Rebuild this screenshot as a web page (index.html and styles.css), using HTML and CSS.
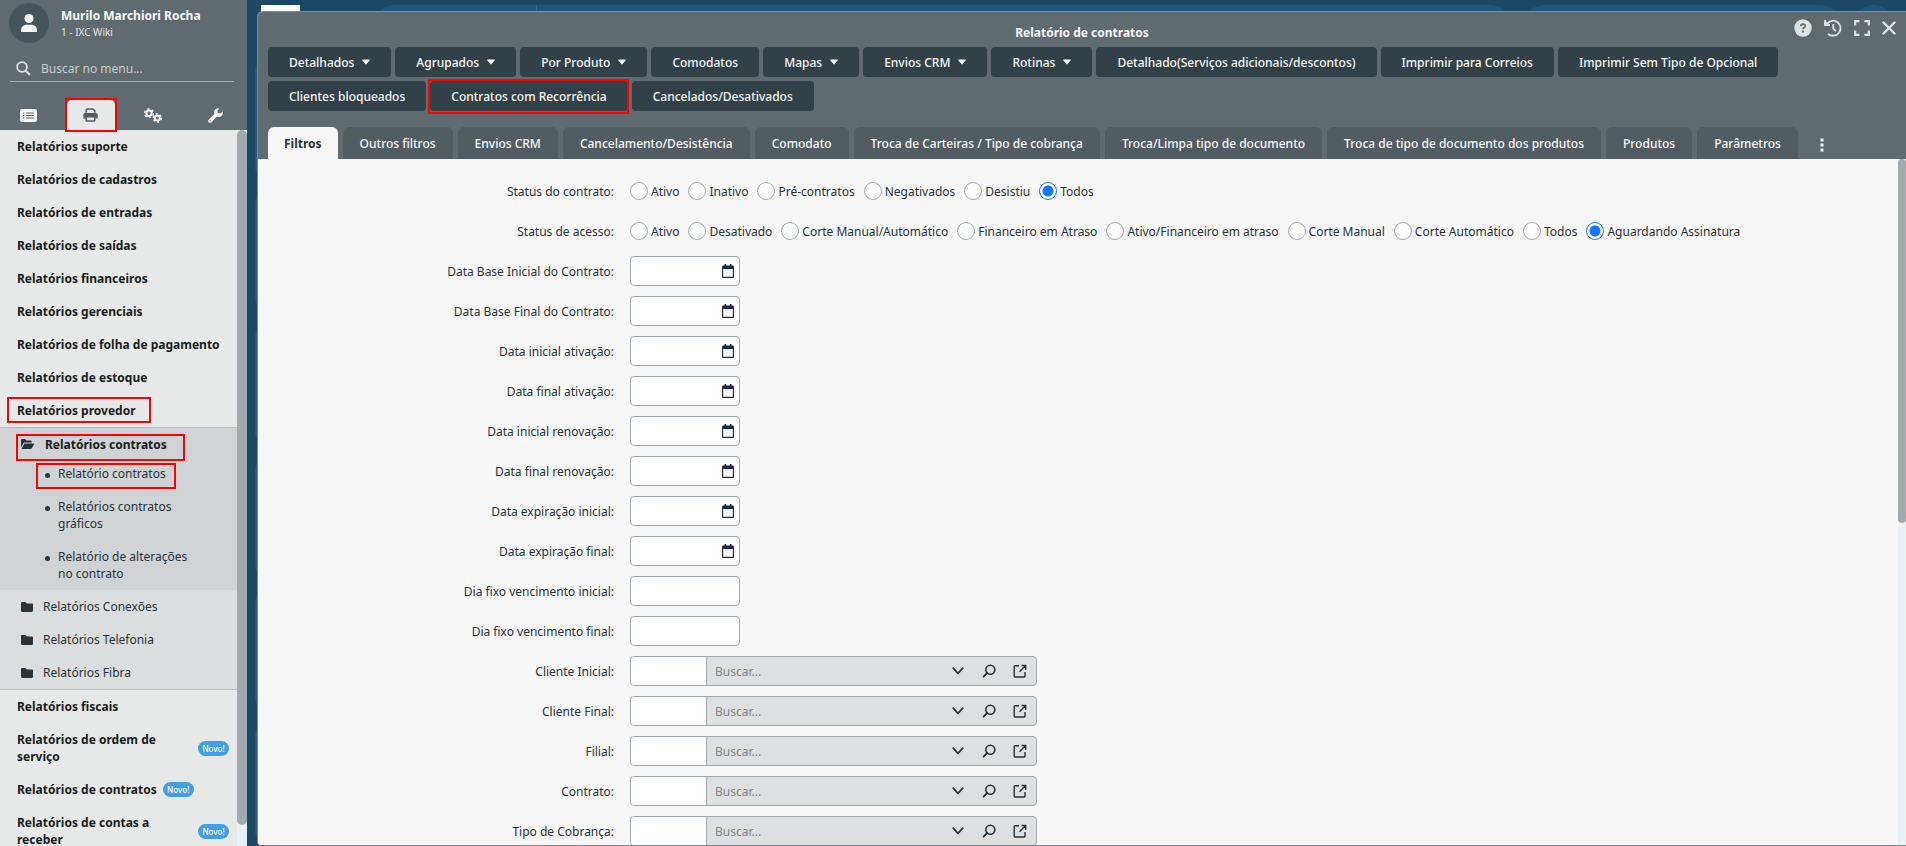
FILE: index.html
```html
<!DOCTYPE html>
<html lang="pt-BR">
<head>
<meta charset="utf-8">
<title>Relatório de contratos</title>
<link rel="stylesheet" href="styles.css">
</head>
<body>
<svg class="defs" aria-hidden="true">
  <symbol id="i-caret" viewBox="0 0 8 6"><path d="M0.6 0.5h6.8c.5 0 .7.5.4.8L4.4 5.2c-.2.3-.6.3-.8 0L.2 1.3C-.1 1 .1.500.6.5z" fill="currentColor"/></symbol>
  <symbol id="i-calendar" viewBox="0 0 12 14"><path fill="currentColor" fill-rule="evenodd" d="M2.500 0h1.500v1.600h4V0h1.500v1.600h1.200c.7 0 1.300.6 1.300 1.300v9.800c0 .7-.6 1.300-1.300 1.300H1.300C.6 14 0 13.400 0 12.700V2.900c0-.7.6-1.300 1.300-1.300h1.200zM1.200 5v7.800h9.600V5z"/></symbol>
  <symbol id="i-chevron" viewBox="0 0 12 8"><path d="M1.200 1.200 6 6.300l4.800-5.100" fill="none" stroke="currentColor" stroke-width="1.700" stroke-linecap="round" stroke-linejoin="round"/></symbol>
  <symbol id="i-lens" viewBox="0 0 14 14"><circle cx="8.300" cy="5.700" r="4.500" fill="none" stroke="currentColor" stroke-width="1.600"/><path d="M5.200 8.800 1.600 12.600" stroke="currentColor" stroke-width="1.900" stroke-linecap="round"/></symbol>
  <symbol id="i-open" viewBox="0 0 14 14"><path d="M6 1.700H2.200c-.6 0-1 .4-1 1v9.300c0 .6.4 1 1 1h8.800c.6 0 1-.4 1-1V8M8.500 1.500h4.200v4.200M12.700 1.500 6.500 7.800" fill="none" stroke="currentColor" stroke-width="1.400"/></symbol>
  <symbol id="i-folder" viewBox="0 0 12 10"><path d="M1.200 0h3.300l1.300 1.400h5c.7 0 1.200.5 1.200 1.200v6.200c0 .7-.5 1.200-1.200 1.200H1.200C.5 10 0 9.500 0 8.800V1.200C0 .5.5 0 1.200 0z" fill="currentColor"/></symbol>
</svg>

<div class="app">
  <aside class="sidebar">
    <header class="side-head">
      <div class="user">
        <span class="avatar"><svg width="16" height="18" viewBox="0 0 16 18"><circle cx="8" cy="4.500" r="4.500" fill="#f4f5f5"/><path d="M0 18v-1.500C0 13 2.500 10.800 5.500 10.800h5c3 0 5.500 2.200 5.500 5.700V18z" fill="#f4f5f5"/></svg></span>
        <div class="who"><strong>Murilo Marchiori Rocha</strong><span>1 - IXC Wiki</span></div>
      </div>
      <label class="menu-search">
        <svg width="15" height="15" viewBox="0 0 15 15"><circle cx="6" cy="6" r="4.900" fill="none" stroke="#dfe3e4" stroke-width="1.800"/><path d="M9.700 9.700 14 14" stroke="#dfe3e4" stroke-width="2"/></svg>
        <input type="text" placeholder="Buscar no menu..." aria-label="Buscar no menu">
      </label>
      <nav class="side-tabs" aria-label="Seções">
        <button type="button" aria-label="Cadastros"><svg width="17" height="13" viewBox="0 0 17 13"><rect width="17" height="13" rx="2" fill="#f7f7f7"/><path d="M3 4h1.500M3 6.500h1.500M3 9h1.500M6 4h8M6 6.500h8M6 9h8" stroke="#5f6b71" stroke-width="1.200"/></svg></button>
        <button type="button" class="active mark mark-tab" aria-label="Relatórios"><svg width="15" height="14" viewBox="0 0 15 14"><path d="M3.300 4.800V2c0-.6.4-1 1-1h5.500L11.700 2.700v2.100" fill="none" stroke="#4f5b61" stroke-width="1.600"/><path d="M2 5h11a1.700 1.700 0 0 1 1.700 1.700v3.800h-2.200V9h-10v1.500H.3V6.700A1.700 1.700 0 0 1 2 5z" fill="#4f5b61"/><rect x="3.300" y="8.800" width="8.400" height="4.200" rx=".6" fill="none" stroke="#4f5b61" stroke-width="1.600"/></svg></button>
        <button type="button" aria-label="Configurações"><svg width="18" height="15" viewBox="0 0 18 15"><g fill="none" stroke="#f7f7f7"><circle cx="5" cy="5.200" r="2.700" stroke-width="2"/><circle cx="5" cy="5.200" r="4.300" stroke-width="1.500" stroke-dasharray="2.200 2.300"/><circle cx="13.300" cy="10" r="2.500" stroke-width="1.900"/><circle cx="13.300" cy="10" r="4" stroke-width="1.500" stroke-dasharray="2.100 2.100"/></g></svg></button>
        <button type="button" aria-label="Ferramentas"><svg width="15" height="15" viewBox="0 0 15 15"><path fill="#f7f7f7" fill-rule="evenodd" d="M14.700 3.200a4.300 4.300 0 0 1-5.800 5.300l-5.500 5.700a1.900 1.900 0 0 1-2.700-2.700l5.700-5.400A4.300 4.300 0 0 1 11.700.4L9.400 2.800l.5 2.300 2.300.5zM2.100 12a.7.7 0 1 0 0 1.400.7.7 0 0 0 0-1.400z"/></svg></button>
      </nav>
    </header>
    <div class="side-body">
      <nav class="menu" aria-label="Relatórios">
        <a href="#" class="item">Relatórios suporte</a>
        <a href="#" class="item">Relatórios de cadastros</a>
        <a href="#" class="item">Relatórios de entradas</a>
        <a href="#" class="item">Relatórios de saídas</a>
        <a href="#" class="item">Relatórios financeiros</a>
        <a href="#" class="item">Relatórios gerenciais</a>
        <a href="#" class="item">Relatórios de folha de pagamento</a>
        <a href="#" class="item">Relatórios de estoque</a>
        <a href="#" class="item"><span class="mark mark-provider">Relatórios provedor</span></a>
        <div class="group">
          <div class="open-folder">
            <a href="#" class="folder-title"><span class="mark mark-folder"><svg width="13" height="11" viewBox="0 0 13 11"><path d="M0 8.500V1.200C0 .5.500 0 1.200 0h2.900l1.300 1.400h4c.7 0 1.200.5 1.200 1.200v1H3.600c-.6 0-1 .3-1.300.8zM.5 10 3 5.200c.2-.4.5-.6.9-.6h8.400c.5 0 .8.5.6.9l-2.200 4c-.2.300-.5.500-.9.500z" fill="#27343a"/></svg>Relatórios contratos</span></a>
            <ul class="leafs">
              <li><a href="#"><span class="mark mark-leaf">Relatório contratos</span></a></li>
              <li><a href="#">Relatórios contratos gráficos</a></li>
              <li><a href="#">Relatório de alterações no contrato</a></li>
            </ul>
          </div>
          <a href="#" class="folder"><svg width="12" height="10"><use href="#i-folder"/></svg>Relatórios Conexões</a>
          <a href="#" class="folder"><svg width="12" height="10"><use href="#i-folder"/></svg>Relatórios Telefonia</a>
          <a href="#" class="folder"><svg width="12" height="10"><use href="#i-folder"/></svg>Relatórios Fibra</a>
        </div>
        <a href="#" class="item">Relatórios fiscais</a>
        <a href="#" class="item"><span>Relatórios de ordem de serviço</span><span class="badge">Novo!</span></a>
        <a href="#" class="item"><span>Relatórios de contratos</span><span class="badge">Novo!</span></a>
        <a href="#" class="item"><span>Relatórios de contas a receber</span><span class="badge">Novo!</span></a>
      </nav>
      <div class="side-track"><div class="side-thumb"></div></div>
    </div>
  </aside>

  <main class="desktop">
    <div class="topbar"><span class="logo"></span><span class="pill pill-wide"><i></i></span><span class="pill"></span><span class="dot"></span></div>
    <div class="cards"><i></i><i></i><i></i><i></i><i></i><i></i></div>

    <section class="window">
      <header class="win-head">
        <h1>Relatório de contratos</h1>
        <div class="win-tools">
          <button type="button" aria-label="Ajuda"><svg width="18" height="18" viewBox="0 0 18 18"><circle cx="9" cy="9" r="8.700" fill="#dee2e3"/><path d="M6.700 7.200c.2-2.900 4.800-2.700 4.600-.2-.1 1.500-2.200 1.500-2.300 3.200" fill="none" stroke="#5f6b71" stroke-width="1.700"/><circle cx="9" cy="12.600" r="1.100" fill="#5f6b71"/></svg></button>
          <button type="button" aria-label="Histórico"><svg width="18" height="18" viewBox="0 0 18 18"><g fill="none" stroke="#dee2e3" stroke-width="1.800"><path d="M2.900 4.900A7.500 7.500 0 1 1 4 14.800"/><path d="M1 1v5h5"/><path d="M9.300 5v4.600l2.600 2.600"/></g><path d="M.5.800V6.500h5.700z" fill="#dee2e3"/></svg></button>
          <button type="button" aria-label="Maximizar"><svg width="16" height="16" viewBox="0 0 16 16"><path d="M1.200 5.500V1.200h4.300M10.500 1.200h4.300v4.300M14.800 10.500v4.300h-4.300M5.500 14.800H1.200v-4.300" fill="none" stroke="#dee2e3" stroke-width="2.200"/></svg></button>
          <button type="button" aria-label="Fechar"><svg width="14" height="14" viewBox="0 0 14 14"><path d="M1.500 1.500l11 11M12.500 1.500l-11 11" stroke="#dee2e3" stroke-width="2.400" stroke-linecap="round"/></svg></button>
        </div>
        <div class="actions">
          <button type="button">Detalhados<svg width="8" height="6"><use href="#i-caret"/></svg></button>
          <button type="button">Agrupados<svg width="8" height="6"><use href="#i-caret"/></svg></button>
          <button type="button">Por Produto<svg width="8" height="6"><use href="#i-caret"/></svg></button>
          <button type="button">Comodatos</button>
          <button type="button">Mapas<svg width="8" height="6"><use href="#i-caret"/></svg></button>
          <button type="button">Envios CRM<svg width="8" height="6"><use href="#i-caret"/></svg></button>
          <button type="button">Rotinas<svg width="8" height="6"><use href="#i-caret"/></svg></button>
          <button type="button">Detalhado(Serviços adicionais/descontos)</button>
          <button type="button">Imprimir para Correios</button>
          <button type="button">Imprimir Sem Tipo de Opcional</button>
          <button type="button">Clientes bloqueados</button>
          <button type="button" class="mark mark-action">Contratos com Recorrência</button>
          <button type="button">Cancelados/Desativados</button>
        </div>
        <div class="tabs" role="tablist">
          <button type="button" role="tab" aria-selected="true">Filtros</button>
          <button type="button" role="tab">Outros filtros</button>
          <button type="button" role="tab">Envios CRM</button>
          <button type="button" role="tab">Cancelamento/Desistência</button>
          <button type="button" role="tab">Comodato</button>
          <button type="button" role="tab">Troca de Carteiras / Tipo de cobrança</button>
          <button type="button" role="tab">Troca/Limpa tipo de documento</button>
          <button type="button" role="tab">Troca de tipo de documento dos produtos</button>
          <button type="button" role="tab">Produtos</button>
          <button type="button" role="tab">Parâmetros</button>
          <button type="button" class="more" aria-label="Mais abas"><svg width="4" height="14" viewBox="0 0 4 14"><path d="M.5.500h3v3h-3zM.5 5.500h3v3h-3zM.5 10.500h3v3h-3z" fill="#f7f7f7"/></svg></button>
        </div>
      </header>

      <div class="win-body">
        <form class="form">
          <div class="row" role="radiogroup" aria-labelledby="l-sc">
            <span class="label" id="l-sc">Status do contrato:</span>
            <div class="radios">
              <label><input type="radio" name="sc">Ativo</label>
              <label><input type="radio" name="sc">Inativo</label>
              <label><input type="radio" name="sc">Pré-contratos</label>
              <label><input type="radio" name="sc">Negativados</label>
              <label><input type="radio" name="sc">Desistiu</label>
              <label><input type="radio" name="sc" checked>Todos</label>
            </div>
          </div>
          <div class="row" role="radiogroup" aria-labelledby="l-sa">
            <span class="label" id="l-sa">Status de acesso:</span>
            <div class="radios">
              <label><input type="radio" name="sa">Ativo</label>
              <label><input type="radio" name="sa">Desativado</label>
              <label><input type="radio" name="sa">Corte Manual/Automático</label>
              <label><input type="radio" name="sa">Financeiro em Atraso</label>
              <label><input type="radio" name="sa">Ativo/Financeiro em atraso</label>
              <label><input type="radio" name="sa">Corte Manual</label>
              <label><input type="radio" name="sa">Corte Automático</label>
              <label><input type="radio" name="sa">Todos</label>
              <label><input type="radio" name="sa" checked>Aguardando Assinatura</label>
            </div>
          </div>
          <div class="row"><label class="label" for="d1">Data Base Inicial do Contrato:</label><div class="date"><input type="text" id="d1"><svg width="12" height="14"><use href="#i-calendar"/></svg></div></div>
          <div class="row"><label class="label" for="d2">Data Base Final do Contrato:</label><div class="date"><input type="text" id="d2"><svg width="12" height="14"><use href="#i-calendar"/></svg></div></div>
          <div class="row"><label class="label" for="d3">Data inicial ativação:</label><div class="date"><input type="text" id="d3"><svg width="12" height="14"><use href="#i-calendar"/></svg></div></div>
          <div class="row"><label class="label" for="d4">Data final ativação:</label><div class="date"><input type="text" id="d4"><svg width="12" height="14"><use href="#i-calendar"/></svg></div></div>
          <div class="row"><label class="label" for="d5">Data inicial renovação:</label><div class="date"><input type="text" id="d5"><svg width="12" height="14"><use href="#i-calendar"/></svg></div></div>
          <div class="row"><label class="label" for="d6">Data final renovação:</label><div class="date"><input type="text" id="d6"><svg width="12" height="14"><use href="#i-calendar"/></svg></div></div>
          <div class="row"><label class="label" for="d7">Data expiração inicial:</label><div class="date"><input type="text" id="d7"><svg width="12" height="14"><use href="#i-calendar"/></svg></div></div>
          <div class="row"><label class="label" for="d8">Data expiração final:</label><div class="date"><input type="text" id="d8"><svg width="12" height="14"><use href="#i-calendar"/></svg></div></div>
          <div class="row"><label class="label" for="v1">Dia fixo vencimento inicial:</label><div class="date"><input type="text" id="v1"></div></div>
          <div class="row"><label class="label" for="v2">Dia fixo vencimento final:</label><div class="date"><input type="text" id="v2"></div></div>
          <div class="row"><label class="label" for="c1">Cliente Inicial:</label><div class="lookup"><input type="text" class="code" id="c1"><input type="text" class="find" placeholder="Buscar..." aria-label="Buscar cliente inicial"><button type="button" aria-label="Abrir lista"><svg width="12" height="8"><use href="#i-chevron"/></svg></button><button type="button" aria-label="Pesquisar"><svg width="14" height="14"><use href="#i-lens"/></svg></button><button type="button" aria-label="Abrir cadastro"><svg width="14" height="14"><use href="#i-open"/></svg></button></div></div>
          <div class="row"><label class="label" for="c2">Cliente Final:</label><div class="lookup"><input type="text" class="code" id="c2"><input type="text" class="find" placeholder="Buscar..." aria-label="Buscar cliente final"><button type="button" aria-label="Abrir lista"><svg width="12" height="8"><use href="#i-chevron"/></svg></button><button type="button" aria-label="Pesquisar"><svg width="14" height="14"><use href="#i-lens"/></svg></button><button type="button" aria-label="Abrir cadastro"><svg width="14" height="14"><use href="#i-open"/></svg></button></div></div>
          <div class="row"><label class="label" for="c3">Filial:</label><div class="lookup"><input type="text" class="code" id="c3"><input type="text" class="find" placeholder="Buscar..." aria-label="Buscar filial"><button type="button" aria-label="Abrir lista"><svg width="12" height="8"><use href="#i-chevron"/></svg></button><button type="button" aria-label="Pesquisar"><svg width="14" height="14"><use href="#i-lens"/></svg></button><button type="button" aria-label="Abrir cadastro"><svg width="14" height="14"><use href="#i-open"/></svg></button></div></div>
          <div class="row"><label class="label" for="c4">Contrato:</label><div class="lookup"><input type="text" class="code" id="c4"><input type="text" class="find" placeholder="Buscar..." aria-label="Buscar contrato"><button type="button" aria-label="Abrir lista"><svg width="12" height="8"><use href="#i-chevron"/></svg></button><button type="button" aria-label="Pesquisar"><svg width="14" height="14"><use href="#i-lens"/></svg></button><button type="button" aria-label="Abrir cadastro"><svg width="14" height="14"><use href="#i-open"/></svg></button></div></div>
          <div class="row"><label class="label" for="c5">Tipo de Cobrança:</label><div class="lookup"><input type="text" class="code" id="c5"><input type="text" class="find" placeholder="Buscar..." aria-label="Buscar tipo de cobrança"><button type="button" aria-label="Abrir lista"><svg width="12" height="8"><use href="#i-chevron"/></svg></button><button type="button" aria-label="Pesquisar"><svg width="14" height="14"><use href="#i-lens"/></svg></button><button type="button" aria-label="Abrir cadastro"><svg width="14" height="14"><use href="#i-open"/></svg></button></div></div>
        </form>
        <div class="win-track"><div class="win-thumb"></div></div>
      </div>
    </section>
  </main>
</div>
</body>
</html>
```
FILE: styles.css
```css
* { box-sizing: border-box; }
body {
  margin: 0;
  font: 12px/17px "Noto Sans", "Open Sans", sans-serif;
  color: #27343a;
  background: #1b4965;
}
button, input { font: inherit; color: inherit; }
button { margin: 0; padding: 0; border: 0; background: none; }
a { color: inherit; text-decoration: none; }
svg { display: block; flex: none; }
.defs { position: absolute; width: 0; height: 0; }

.app { display: flex; height: 100vh; overflow: hidden; }

/* Sidebar */
.sidebar { flex: none; width: 247px; display: flex; flex-direction: column; }
.side-head { flex: none; height: 130px; display: flex; flex-direction: column; background: #5f6b71; }
.user { display: flex; gap: 12px; padding: 3px 9px 0; }
.avatar { display: grid; place-items: center; width: 40px; height: 40px; border-radius: 50%; background: #46545b; }
.who { padding-top: 4px; }
.who strong, .who span { display: block; color: #f7f7f7; }
.who span { font-size: 10px; color: #e3e6e7; }
.menu-search { display: flex; align-items: center; gap: 10px; height: 26px; margin: 13px 13px 0 10px; padding: 0 6px; border-bottom: 1px solid #a2aaaf; }
.menu-search input { flex: 1; min-width: 0; height: 24px; padding: 0; border: 0; outline: 0; background: none; color: #f7f7f7; }
.menu-search input::placeholder { color: #c5cbce; opacity: 1; }
.side-tabs { display: flex; justify-content: space-between; margin-top: auto; padding: 0 7px 0 4px; }
.side-tabs button { display: grid; place-items: center; width: 48px; height: 30px; }
.side-tabs .active { border-radius: 5px 5px 0 0; background: #e7e9e8; }
.side-body { flex: 1; min-height: 0; display: flex; }
.menu { flex: 1; overflow: hidden; background: #e7e9e8; }
.item { display: flex; align-items: center; gap: 6px; padding: 8px 8px 8px 17px; font-weight: 700; color: #161d20; }
.badge { flex: none; width: 31px; height: 15px; border-radius: 8px; background: #429fe3; color: #fff; font-size: 8px; font-weight: 500; line-height: 15px; text-align: center; }
.group { border-top: 1px solid #b9c1c7; border-bottom: 1px solid #b9c1c7; background: #dadedf; }
.open-folder { background: #cfd3d6; }
.folder-title { display: flex; padding: 8px 8px 4px 21px; font-weight: 700; color: #161d20; }
.mark-folder { display: flex; align-items: center; gap: 11px; }
.folder { display: flex; align-items: center; gap: 10px; padding: 8px 8px 8px 21px; }
.leafs { margin: 0; padding: 0; list-style: none; }
.leafs li { position: relative; padding: 8px 40px 8px 58px; }
.leafs li::before { content: ""; position: absolute; left: 45px; top: 16px; width: 5px; height: 5px; border-radius: 50%; background: #27343a; }

/* Red highlight frames */
.mark { position: relative; }
.mark::after { content: ""; position: absolute; z-index: 1; border: 2px solid #f00; pointer-events: none; }
.mark-tab::after { inset: -2px; }
.mark-action::after { inset: -2px -1px -3px -2px; }
.mark-provider::after { inset: -5px -15px -4px -10px; }
.mark-folder::after { inset: -2px -18px -8px -5px; }
.mark-leaf::after { inset: -2px -10px -7px -22px; }

.side-track { width: 10px; background: #e8f1f5; }
.side-thumb { height: 97%; border-radius: 5px; background: #a2aaaf; }

/* Backdrop */
.desktop { position: relative; flex: 1; min-width: 0; overflow: hidden; padding: 5px 13px 0 14px; }
.topbar { display: flex; gap: 13px; height: 40px; }
.logo { width: 39px; margin-right: 61px; background: #fff; }
.pill { width: 316px; border-radius: 20px; background: #21557a; }
.pill-wide { flex: 1; display: flex; padding-left: 162px; }
.pill-wide i { width: 1px; background: #356a91; }
.dot { width: 40px; border-radius: 50%; background: #21557a; }
.cards { display: flex; flex-direction: column; gap: 20px; margin: 17px 0 0 -6px; width: 120px; }
.cards i { height: 113px; border-radius: 8px; background: #21557a; }

/* Window */
.window { position: absolute; inset: 11px 0 0 10px; display: flex; flex-direction: column; border: 1px solid #7e8b92; border-right: 0; border-radius: 6px 0 0 4px; overflow: hidden; background: #f7f7f7; }
.win-head { position: relative; flex: none; background: #5f6b71; color: #f7f7f7; padding: 12px 10px 0; }
.win-head h1 { margin: 0 0 7px; font-size: 12px; line-height: 17px; text-align: center; }
.win-tools { position: absolute; top: 7px; right: 10px; display: flex; align-items: center; gap: 12px; }
.actions { display: flex; flex-wrap: wrap; gap: 4px; margin-top: -1px; }
.actions button { display: flex; align-items: center; gap: 8px; height: 30px; padding: 0 21px; border-radius: 4px; background: #314147; font-weight: 500; }
.tabs { display: flex; gap: 5px; margin-top: 16px; }
.tabs button { height: 32px; padding: 0 17px; border-radius: 6px 6px 0 0; background: #515d63; font-weight: 500; white-space: nowrap; }
.tabs [aria-selected="true"] { padding: 0 16px; background: #f7f7f7; color: #27343a; font-weight: 700; }
.tabs .more { padding-top: 4px; background: none; }
.win-body { flex: 1; min-height: 0; display: flex; }
.form { flex: 1; min-width: 0; overflow: hidden; padding-top: 12px; }
.row { display: flex; align-items: center; gap: 16px; padding: 5px 0; }
.label { flex: none; width: 356px; text-align: right; }
.radios { display: flex; gap: 9px; height: 30px; align-items: center; white-space: nowrap; }
.radios label { display: flex; align-items: center; gap: 3px; }
.radios input { appearance: none; flex: none; width: 18px; height: 18px; margin: 0; border: 1px solid #a2aaaf; border-radius: 50%; background: #fff; }
.radios input:checked { border-color: #1677ff; background: radial-gradient(circle, #1677ff 5px, #fff 6px); }
.date { display: flex; align-items: center; width: 110px; height: 30px; padding-right: 5px; border: 1px solid #a2aaaf; border-radius: 4px; background: #fff; color: #1d2b4f; }
.date input { flex: 1; min-width: 0; height: 28px; padding: 0 8px; border: 0; outline: 0; background: none; }
.lookup { display: flex; width: 407px; height: 30px; padding-right: 1px; border: 1px solid #a2aaaf; border-radius: 4px; background: #dce0e0; overflow: hidden; }
.lookup input { border: 0; outline: 0; padding: 0 8px; min-width: 0; }
.lookup .code { width: 76px; border-right: 1px solid #a2aaaf; background: #fff; }
.lookup .find { flex: 1; background: none; }
.lookup .find::placeholder { color: #7f8587; opacity: 1; }
.lookup button { display: grid; place-items: center; width: 31px; }
.win-track { width: 8px; background: #e8f1f5; }
.win-thumb { height: 53%; border-radius: 4px; background: #a2aaaf; }
```
